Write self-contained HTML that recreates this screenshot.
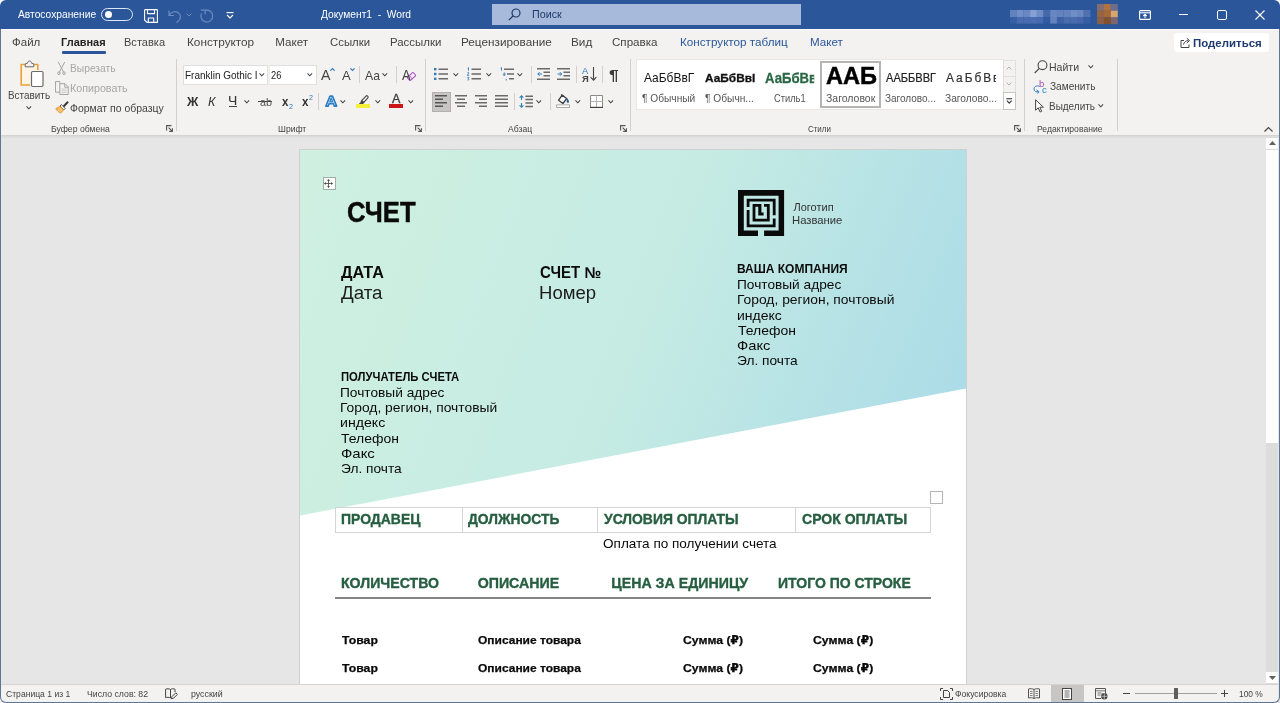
<!DOCTYPE html>
<html lang="ru">
<head>
<meta charset="utf-8">
<title>Документ1 - Word</title>
<style>
html,body{margin:0;padding:0;}
body{width:1280px;height:703px;overflow:hidden;background:#e6e6e6;font-family:"Liberation Sans",sans-serif;}
#app{position:relative;width:1280px;height:703px;overflow:hidden;will-change:transform;}
.abs{position:absolute;}
.t{position:absolute;white-space:pre;line-height:1;transform-origin:0 50%;}
svg{position:absolute;overflow:visible;}
.sep{position:absolute;width:1px;background:#d2d0ce;}
.chev{position:absolute;width:5.6px;height:3.3px;margin-left:0.3px;}
</style>
</head>
<body>
<div id="app">
<!-- title bar -->
<div class="abs" style="left:0;top:0;width:1280px;height:12px;background:#fff;"></div>
<div class="abs" style="left:0;top:0;width:1280px;height:28.500px;background:#2b579a;border-radius:6px 6px 0 0;"></div>
<div class="abs" style="left:492px;top:4px;width:309px;height:21px;background:#a7badb;"></div>
<!-- autosave toggle -->
<div class="abs" style="left:101px;top:8px;width:30px;height:11px;border:1px solid #dde6f4;border-radius:7px;"></div>
<div class="abs" style="left:105px;top:11px;width:7px;height:7px;border-radius:50%;background:#fff;"></div>
<!-- save icon -->
<svg style="left:144px;top:9px;" width="14" height="14" viewBox="0 0 14 14" fill="none" stroke="#fff" stroke-width="1.100" stroke-linejoin="round">
<path d="M1.500.6h11.200c.4 0 .7.300.7.700v12.100H3L.6 11V1.300c0-.400.300-.700.900-.700z"/><path d="M3.500.6v4h7V.6"/><path d="M4.300 13.400V9h5.400v4.400"/></svg>
<!-- undo / redo (disabled) -->
<svg style="left:167px;top:9px;" width="16" height="14" viewBox="0 0 16 14" fill="none" stroke="#6d8cc0" stroke-width="1.2">
<path d="M2 1.5v5h5"/><path d="M2.3 6.3C4 3 8 1.800 11 3.500c3 1.800 3.300 6 .4 8.500L9.500 13.500"/></svg>
<svg style="left:186px;top:13px;" width="6" height="4" viewBox="0 0 6 4" fill="none" stroke="#6d8cc0" stroke-width="1"><path d="M.5.5L3 3 5.500.5"/></svg>
<svg style="left:200px;top:9px;" width="14" height="14" viewBox="0 0 14 14" fill="none" stroke="#6d8cc0" stroke-width="1.200"><path d="M5.200 1.400A5.900 5.900 0 1 1 1.500 4.500"/><path d="M.8 1.100h4.400v4.200"/></svg>
<!-- customize qat -->
<svg style="left:226px;top:12px;" width="8" height="7" viewBox="0 0 8 7" fill="none" stroke="#fff" stroke-width="1.1"><path d="M.5.6h7"/><path d="M1 3l3 3 3-3"/></svg>
<!-- search magnifier -->
<svg style="left:508px;top:8px;" width="13" height="13" viewBox="0 0 13 13" fill="none" stroke="#1e3a68" stroke-width="1.2"><circle cx="8" cy="5" r="4"/><path d="M5 8L.8 12.200"/></svg>
<!-- blurred account name -->
<svg style="left:1009.600px;top:10.400px;" width="80.400" height="13.600" viewBox="0 0 80.400 13.600"><rect x="0.00" y="0" width="6.80" height="7" fill="rgb(98,130,190)"/><rect x="6.70" y="0" width="6.80" height="7" fill="rgb(112,142,200)"/><rect x="13.40" y="0" width="6.80" height="7" fill="rgb(105,135,195)"/><rect x="20.10" y="0" width="6.80" height="7" fill="rgb(135,160,212)"/><rect x="26.80" y="0" width="6.80" height="7" fill="rgb(110,140,200)"/><rect x="33.50" y="0" width="6.80" height="7" fill="rgb(70,105,170)"/><rect x="40.20" y="0" width="6.80" height="7" fill="rgb(105,135,195)"/><rect x="46.90" y="0" width="6.80" height="7" fill="rgb(100,130,190)"/><rect x="53.60" y="0" width="6.80" height="7" fill="rgb(100,130,190)"/><rect x="60.30" y="0" width="6.80" height="7" fill="rgb(112,142,198)"/><rect x="67.00" y="0" width="6.80" height="7" fill="rgb(105,135,192)"/><rect x="73.70" y="0" width="6.80" height="7" fill="rgb(80,112,175)"/><rect x="0.00" y="7" width="6.80" height="6.600" fill="rgb(55,95,165)"/><rect x="6.70" y="7" width="6.80" height="6.600" fill="rgb(72,108,175)"/><rect x="13.40" y="7" width="6.80" height="6.600" fill="rgb(72,108,175)"/><rect x="20.10" y="7" width="6.80" height="6.600" fill="rgb(75,110,178)"/><rect x="26.80" y="7" width="6.80" height="6.600" fill="rgb(70,105,175)"/><rect x="33.50" y="7" width="6.80" height="6.600" fill="rgb(50,90,160)"/><rect x="40.20" y="7" width="6.80" height="6.600" fill="rgb(100,130,190)"/><rect x="46.90" y="7" width="6.80" height="6.600" fill="rgb(62,98,168)"/><rect x="53.60" y="7" width="6.80" height="6.600" fill="rgb(75,108,172)"/><rect x="60.30" y="7" width="6.80" height="6.600" fill="rgb(75,108,172)"/><rect x="67.00" y="7" width="6.80" height="6.600" fill="rgb(70,104,170)"/><rect x="73.70" y="7" width="6.80" height="6.600" fill="rgb(55,94,162)"/></svg>
<svg style="left:1096.800px;top:3.900px;" width="20.700" height="20.100" viewBox="0 0 20.700 20.100"><rect x="0.00" y="0.00" width="7" height="6.800" fill="rgb(130,110,115)"/><rect x="6.90" y="0.00" width="7" height="6.800" fill="rgb(175,115,65)"/><rect x="13.80" y="0.00" width="7" height="6.800" fill="rgb(110,110,140)"/><rect x="0.00" y="6.70" width="7" height="6.800" fill="rgb(150,100,65)"/><rect x="6.90" y="6.70" width="7" height="6.800" fill="rgb(165,105,55)"/><rect x="13.80" y="6.70" width="7" height="6.800" fill="rgb(215,165,110)"/><rect x="0.00" y="13.40" width="7" height="6.800" fill="rgb(140,95,70)"/><rect x="6.90" y="13.40" width="7" height="6.800" fill="rgb(130,80,45)"/><rect x="13.80" y="13.40" width="7" height="6.800" fill="rgb(125,100,110)"/></svg>
<!-- ribbon display options -->
<svg style="left:1139px;top:10px;" width="12" height="10" viewBox="0 0 12 10" fill="none" stroke="#fff" stroke-width="1.1"><rect x=".6" y=".6" width="10.800" height="8.800" rx="1"/><path d="M.6 2.800h10.800"/><path d="M6 8V4.500M4.300 6L6 4.300 7.700 6"/></svg>
<!-- window controls -->
<div class="abs" style="left:1179px;top:14px;width:9px;height:1px;background:#fff;"></div>
<div class="abs" style="left:1217px;top:10px;width:8px;height:8px;border:1px solid #fff;border-radius:2px;"></div>
<svg style="left:1255px;top:10px;" width="10" height="10" viewBox="0 0 10 10" fill="none" stroke="#fff" stroke-width="1.1"><path d="M.5.5l9 9M9.500.5l-9 9"/></svg>

<!-- ribbon background -->
<div class="abs" style="left:0;top:28.500px;width:1280px;height:106.500px;background:#f3f2f1;"></div>
<div class="abs" style="left:0;top:28.500px;width:1280px;height:1.500px;background:#fbfbfb;"></div>
<div class="abs" style="left:0;top:135px;width:1280px;height:4px;background:linear-gradient(#cfcfcf,#dcdcdc 40%,#e6e6e6);"></div>
<!-- active tab underline -->
<div class="abs" style="left:62px;top:51px;width:44px;height:3px;background:#2b579a;border-radius:1px;"></div>
<!-- share button -->
<div class="abs" style="left:1174px;top:33px;width:95px;height:19px;background:#fff;border-radius:3px;"></div>
<svg style="left:1180px;top:37px;" width="11" height="11" viewBox="0 0 11 11" fill="none" stroke="#444" stroke-width="1"><path d="M4 3.500H1v7h8V7.500"/><path d="M3.500 7.500C4 5 6 3.600 8.500 3.600M6.800 1.200L9.500 3.600 6.800 6"/></svg>

<!-- ===== Clipboard group ===== -->
<!-- paste icon -->
<svg style="left:20px;top:60px;" width="24" height="27" viewBox="0 0 24 27" fill="none">
<rect x="1.200" y="4.500" width="16.600" height="20.500" fill="#fdf4e6"/><path d="M5 4.500H1.200v20.500h9" stroke="#e9a23b" stroke-width="1.600"/><path d="M13 4.500h4.800V10" stroke="#e9a23b" stroke-width="1.600"/>
<path d="M5.200 6.800V3.800l2.300-.6C7.700 1.700 8.500 1 9.500 1s1.800.7 2 2.200l2.300.6v3z" stroke="#6a6a6a" stroke-width="1" fill="#f3f2f1"/>
<rect x="11.500" y="11.500" width="11.500" height="15" rx="1.200" stroke="#6a6a6a" stroke-width="1.200" fill="#fff"/></svg>
<svg class="chev" style="left:26px;top:106px;" viewBox="0 0 7 4" fill="none" stroke="#444" stroke-width="1.300"><path d="M.6.5l2.900 2.900L6.400.5"/></svg>
<!-- cut icon (disabled) -->
<svg style="left:57px;top:61.500px;" width="9" height="13" viewBox="0 0 9 13" fill="none" stroke="#a3a3a3" stroke-width="1"><path d="M1.300 0l5.200 10M7.700 0L2.500 10"/><circle cx="2" cy="11.200" r="1.300"/><circle cx="7" cy="11.200" r="1.300"/></svg>
<!-- copy icon (disabled) -->
<svg style="left:54.500px;top:81px;" width="14" height="14" viewBox="0 0 14 14" fill="none" stroke="#a6a6a6" stroke-width="1"><path d="M4.800 2.700V.5H.5v10.700h4.300"/><path d="M4.800 2.700h5.200l3.200 3.200v7.600H4.800z" fill="#f3f2f1"/><path d="M9.700 2.700v3.500h3.500"/><path d="M6.500 8h5M6.500 9.800h5M6.500 11.600h5" stroke="#c4c4c4" stroke-width=".8"/></svg>
<!-- format painter -->
<svg style="left:55px;top:101px;" width="14" height="13" viewBox="0 0 14 13" fill="none"><path d="M12.600 1.200L9 5" stroke="#3b3b3b" stroke-width="2" stroke-linecap="round"/><path d="M6.300 3.600l3.900 3.800-1.300 1.400L5 5z" fill="#fff" stroke="#3b3b3b" stroke-width=".9"/><path d="M5 5.300L.8 7.600c1.300 2.300 2.900 3.800 4.800 4.600L8.700 9z" fill="#f6b55a" stroke="#dd9126" stroke-width=".8"/><path d="M3 8.500l2.500 2.300M4.500 7l2.700 2.700" stroke="#fde6c4" stroke-width=".7"/></svg>
<svg style="left:166px;top:125px;" width="7" height="7" viewBox="0 0 7 7" fill="none" stroke="#555" stroke-width="1.100"><path d="M.6 5.500V.6h4.900"/><path d="M2.600 2.600l3.600 3.600M6.400 3.200v3.200H3.200"/></svg>
<div class="sep" style="left:176px;top:59px;height:72px;"></div>

<!-- ===== Font group ===== -->
<div class="abs" style="left:183px;top:65px;width:83px;height:18px;background:#fff;border:1px solid #e1dfdd;"></div>
<div class="abs" style="left:269px;top:65px;width:46px;height:18px;background:#fff;border:1px solid #e1dfdd;border-left:1px solid #eee;"></div>
<svg class="chev" style="left:259px;top:73px;" viewBox="0 0 7 4" fill="none" stroke="#444" stroke-width="1.300"><path d="M.6.5l2.900 2.900L6.400.5"/></svg>
<svg class="chev" style="left:307px;top:73px;" viewBox="0 0 7 4" fill="none" stroke="#444" stroke-width="1.300"><path d="M.6.5l2.900 2.900L6.400.5"/></svg>
<!-- grow / shrink font carets -->
<svg style="left:330px;top:68px;" width="5" height="3" viewBox="0 0 5 3" fill="none" stroke="#2d7bbf" stroke-width="1.200"><path d="M.4 2.700L2.500.6l2.100 2.100"/></svg>
<svg style="left:350px;top:68px;" width="5" height="3" viewBox="0 0 5 3" fill="none" stroke="#2d7bbf" stroke-width="1.200"><path d="M.4.400L2.500 2.500 4.600.4"/></svg>
<div class="sep" style="left:359px;top:66px;height:17px;"></div>
<svg class="chev" style="left:382px;top:73px;" viewBox="0 0 7 4" fill="none" stroke="#444" stroke-width="1.300"><path d="M.6.5l2.900 2.900L6.400.5"/></svg>
<div class="sep" style="left:396px;top:66px;height:17px;"></div>
<!-- clear formatting eraser -->
<svg style="left:406px;top:72px;" width="11" height="9" viewBox="0 0 11 9"><g transform="rotate(-42 5.500 4.500)"><rect x="1.500" y="2.200" width="8" height="4.600" rx="1" fill="#f6e9fa" stroke="#a64fc0" stroke-width="1"/><path d="M4.500 2.200v4.600" stroke="#a64fc0" stroke-width=".8"/></g></svg>
<div class="sep" style="left:318px;top:93px;height:17px;"></div>
<!-- row 2 -->
<div class="abs" style="left:229px;top:106px;width:8px;height:1px;background:#444;"></div>
<svg class="chev" style="left:244px;top:100px;" viewBox="0 0 7 4" fill="none" stroke="#444" stroke-width="1.300"><path d="M.6.5l2.900 2.900L6.400.5"/></svg>
<div class="abs" style="left:258px;top:101px;width:14px;height:1px;background:#444;"></div>
<!-- text effects A -->
<svg style="left:324.500px;top:95px;" width="12.500" height="12.300" viewBox="0 0 15 14" fill="none" stroke-linejoin="round"><path d="M1 13L6 1h3l5 12h-2.800l-1.100-3H4.900l-1.100 3z" fill="#d6eaf8" stroke="#2a7cc4" stroke-width="1.900"/><path d="M5.800 7.700h3.400L7.500 3.200z" fill="#f3f2f1" stroke="#2a7cc4" stroke-width="1.300"/></svg>
<svg class="chev" style="left:340px;top:100px;" viewBox="0 0 7 4" fill="none" stroke="#444" stroke-width="1.300"><path d="M.6.5l2.900 2.900L6.400.5"/></svg>
<!-- highlighter -->
<svg style="left:358px;top:94.500px;" width="11.500" height="10" viewBox="0 0 13 11" fill="none" stroke="#444" stroke-width="1.300" stroke-linejoin="round"><path d="M4.200 6.200L9.300.8c.8-.6 2.700 1 2 1.900L6.600 8.300z" fill="#fff"/><path d="M4.200 6.200l-.9 2.300-1.700 1.700 3.300-.5 1.700-1.400" fill="#444"/></svg>
<div class="abs" style="left:356px;top:104.200px;width:14px;height:3.800px;background:#f4ef38;"></div>
<svg class="chev" style="left:375px;top:100px;" viewBox="0 0 7 4" fill="none" stroke="#444" stroke-width="1.300"><path d="M.6.5l2.900 2.900L6.400.5"/></svg>
<div class="abs" style="left:389px;top:104.200px;width:14px;height:3.800px;background:#cc1616;"></div>
<svg class="chev" style="left:408px;top:100px;" viewBox="0 0 7 4" fill="none" stroke="#444" stroke-width="1.300"><path d="M.6.5l2.900 2.900L6.400.5"/></svg>
<svg style="left:415px;top:125px;" width="7" height="7" viewBox="0 0 7 7" fill="none" stroke="#555" stroke-width="1.100"><path d="M.6 5.500V.6h4.900"/><path d="M2.600 2.600l3.600 3.600M6.400 3.200v3.200H3.200"/></svg>
<div class="sep" style="left:425px;top:59px;height:72px;"></div>

<!-- ===== Paragraph group ===== -->
<!-- bullets -->
<svg style="left:434px;top:67px;" width="14" height="14" viewBox="0 0 14 14" fill="none"><g fill="#2d7bbf"><rect x="0" y="1" width="2.400" height="2.400"/><rect x="0" y="5.800" width="2.400" height="2.400"/><rect x="0" y="10.600" width="2.400" height="2.400"/></g><g stroke="#6a6a6a" stroke-width="1.400"><path d="M4.500 2.200H14M4.500 7H14M4.500 11.800H14"/></g></svg>
<svg class="chev" style="left:453px;top:73px;" viewBox="0 0 7 4" fill="none" stroke="#444" stroke-width="1.300"><path d="M.6.5l2.900 2.900L6.400.5"/></svg>
<!-- numbering -->
<svg style="left:467px;top:67px;" width="14" height="14" viewBox="0 0 14 14" fill="none"><g stroke="#2d7bbf" stroke-width=".9"><path d="M.6 1.300l.9-.6v3M.4 5.800c.8-.7 1.700-.2 1.300.6L.4 8.300h1.700M.4 10.400h1.500l-.8 1.200c1.200 0 1.100 1.700-.7 1.500"/></g><g stroke="#6a6a6a" stroke-width="1.400"><path d="M4.500 2.200H14M4.500 7H14M4.500 11.800H14"/></g></svg>
<svg class="chev" style="left:486px;top:73px;" viewBox="0 0 7 4" fill="none" stroke="#444" stroke-width="1.300"><path d="M.6.5l2.900 2.900L6.400.5"/></svg>
<!-- multilevel -->
<svg style="left:500px;top:67px;" width="14" height="14" viewBox="0 0 14 14" fill="none"><g stroke="#2d7bbf" stroke-width=".9"><path d="M.6 1.300l.9-.6v3"/><path d="M3.500 6.200c.6-.5 1.500-.4 1.500.4v1.700c-.7.3-1.700.2-1.700-.5 0-.7.9-.8 1.700-.7"/><path d="M6.200 10.500v.2M6.200 12v1.500"/></g><g stroke="#6a6a6a" stroke-width="1.400"><path d="M4 2.200H14M7 7H14M9 11.800H14"/></g></svg>
<svg class="chev" style="left:517px;top:73px;" viewBox="0 0 7 4" fill="none" stroke="#444" stroke-width="1.300"><path d="M.6.5l2.900 2.900L6.400.5"/></svg>
<div class="sep" style="left:531px;top:66px;height:17px;"></div>
<!-- decrease / increase indent -->
<svg style="left:537px;top:68px;" width="13" height="12" viewBox="0 0 13 12" fill="none"><g stroke="#6a6a6a" stroke-width="1.400"><path d="M0 .7h13M6.500 4.200H13M6.500 7.800H13M0 11.300h13"/></g><path d="M5 6H.8M2.600 4.200L.8 6l1.800 1.800" stroke="#2d7bbf" stroke-width="1"/></svg>
<svg style="left:557px;top:68px;" width="13" height="12" viewBox="0 0 13 12" fill="none"><g stroke="#6a6a6a" stroke-width="1.400"><path d="M0 .7h13M6.500 4.200H13M6.500 7.800H13M0 11.300h13"/></g><path d="M.5 6h4.200M2.900 4.200L4.700 6 2.900 7.800" stroke="#2d7bbf" stroke-width="1"/></svg>
<div class="sep" style="left:576px;top:66px;height:17px;"></div>
<!-- sort arrow -->
<svg style="left:590px;top:67px;" width="7" height="14" viewBox="0 0 7 14" fill="none" stroke="#444" stroke-width="1.100"><path d="M3.500 0v13M.6 10.200l2.900 2.900 2.900-2.900"/></svg>
<div class="sep" style="left:602px;top:66px;height:17px;"></div>
<!-- row 2: alignment -->
<div class="abs" style="left:432px;top:92px;width:17px;height:18px;background:#c8c6c4;border:1px solid #b3b0ad;"></div>
<svg style="left:435px;top:95px;" width="12" height="13" viewBox="0 0 12 13" fill="none" stroke="#555" stroke-width="1.500"><path d="M0 .75h12M0 4.250h8M0 7.750h12M0 11.250h8"/></svg>
<svg style="left:455px;top:95px;" width="12" height="13" viewBox="0 0 12 13" fill="none" stroke="#6a6a6a" stroke-width="1.500"><path d="M0 .75h12M2 4.250h8M0 7.750h12M2 11.250h8"/></svg>
<svg style="left:475px;top:95px;" width="12" height="13" viewBox="0 0 12 13" fill="none" stroke="#6a6a6a" stroke-width="1.500"><path d="M0 .75h12M4 4.250h8M0 7.750h12M4 11.250h8"/></svg>
<svg style="left:495px;top:95px;" width="13" height="13" viewBox="0 0 13 13" fill="none" stroke="#6a6a6a" stroke-width="1.500"><path d="M0 .75h13M0 4.250h13M0 7.750h13M0 11.250h13"/></svg>
<div class="sep" style="left:514px;top:93px;height:17px;"></div>
<!-- line spacing -->
<svg style="left:519.300px;top:94.500px;" width="14.200" height="13" viewBox="0 0 14.200 13" fill="none"><path d="M2.500.8v4.200M.6 2.700L2.500.8l1.900 1.900M2.500 12.200V8M.6 10.300l1.900 1.900 1.900-1.900" stroke="#2e86b8" stroke-width="1.100"/><path d="M6.400 1.200h7.600M6.400 4.600h7.600M6.400 8h7.600M6.400 11.400h7.600" stroke="#6a6a6a" stroke-width="1.500"/></svg>
<svg class="chev" style="left:536px;top:100px;" viewBox="0 0 7 4" fill="none" stroke="#444" stroke-width="1.300"><path d="M.6.5l2.900 2.900L6.400.5"/></svg>
<div class="sep" style="left:550px;top:93px;height:17px;"></div>
<!-- shading bucket -->
<svg style="left:556px;top:94px;" width="14" height="14" viewBox="0 0 14 14" fill="none"><path d="M6.200 1.200L2.600 6.200l4.300 3.300 3.700-4.900z" stroke="#3b3b3b" stroke-width="1.300" fill="#fff" stroke-linejoin="round"/><path d="M5.200.6l2.600 2" stroke="#3b3b3b" stroke-width="1.200"/><path d="M10.700 3.800c1.200 1.500 2.300 2.700 2.300 3.900 0 1.500-2.300 1.500-2.300 0z" fill="#225f92"/><rect x=".6" y="10.900" width="12.800" height="2.600" fill="#fff" stroke="#9a9896" stroke-width=".8"/></svg>
<svg class="chev" style="left:575px;top:100px;" viewBox="0 0 7 4" fill="none" stroke="#444" stroke-width="1.300"><path d="M.6.5l2.900 2.900L6.400.5"/></svg>
<!-- borders -->
<svg style="left:589.500px;top:94.500px;" width="13" height="13" viewBox="0 0 13 13" fill="none" stroke="#8a8886" stroke-width="1"><path d="M.5 12.500V.5h12v12" fill="#fff"/><path d="M6.500 .5v12M.5 6.500h12" stroke="#b5b3b1"/><path d="M0 12.400h13" stroke="#444" stroke-width="1.200"/></svg>
<svg class="chev" style="left:608px;top:100px;" viewBox="0 0 7 4" fill="none" stroke="#444" stroke-width="1.300"><path d="M.6.5l2.900 2.900L6.400.5"/></svg>
<svg style="left:620px;top:125px;" width="7" height="7" viewBox="0 0 7 7" fill="none" stroke="#555" stroke-width="1.100"><path d="M.6 5.500V.6h4.900"/><path d="M2.600 2.600l3.600 3.600M6.400 3.200v3.200H3.200"/></svg>
<div class="sep" style="left:630px;top:59px;height:72px;"></div>

<!-- ===== Styles group ===== -->
<div class="abs" style="left:637px;top:60px;width:366px;height:49px;background:#fff;box-shadow:0 0 0 1px #e9e7e5;"></div>
<div class="abs" style="left:820px;top:61px;width:57px;height:43px;border:2px solid #b7b5b3;background:#fff;"></div>
<!-- gallery scroll buttons -->
<div class="abs" style="left:1003px;top:60px;width:11px;height:15px;border:1px solid #e1dfdd;background:#f3f2f1;"></div>
<div class="abs" style="left:1003px;top:76px;width:11px;height:15px;border:1px solid #e1dfdd;background:#f3f2f1;"></div>
<div class="abs" style="left:1003px;top:92px;width:11px;height:16px;border:1px solid #c8c6c4;background:#fff;"></div>
<svg style="left:1006px;top:66px;" width="6" height="4" viewBox="0 0 6 4" fill="none" stroke="#b5b3b1" stroke-width="1"><path d="M.5 3.500L3 1l2.500 2.500"/></svg>
<svg style="left:1006px;top:82px;" width="6" height="4" viewBox="0 0 6 4" fill="none" stroke="#b5b3b1" stroke-width="1"><path d="M.5.5L3 3 5.500.5"/></svg>
<svg style="left:1005.500px;top:97.500px;" width="6.500" height="6" viewBox="0 0 8 7" fill="none" stroke="#444" stroke-width="1.500"><path d="M.5.7h7"/><path d="M1 3l3 3 3-3"/></svg>
<svg style="left:1014px;top:125px;" width="7" height="7" viewBox="0 0 7 7" fill="none" stroke="#555" stroke-width="1.100"><path d="M.6 5.500V.6h4.900"/><path d="M2.600 2.600l3.600 3.600M6.400 3.200v3.200H3.200"/></svg>
<div class="sep" style="left:1024px;top:59px;height:72px;"></div>

<!-- ===== Editing group ===== -->
<svg style="left:1034px;top:60px;" width="14" height="14" viewBox="0 0 14 14" fill="none" stroke="#444" stroke-width="1.100"><circle cx="8.500" cy="5.200" r="4.400"/><path d="M5.300 8.400L.7 13"/></svg>
<svg class="chev" style="left:1088px;top:65px;" viewBox="0 0 7 4" fill="none" stroke="#444" stroke-width="1.300"><path d="M.6.5l2.900 2.900L6.400.5"/></svg>
<svg style="left:1033px;top:85px;" width="8" height="9" viewBox="0 0 8 9" fill="none" stroke="#2d7bbf" stroke-width="1"><path d="M6.500 1.500C4 0 1 1.500 1 4s2.500 3.500 4.500 2.500"/><path d="M3.500 5l2.300 1.600-1.200 2"/></svg>
<svg class="chev" style="left:1098px;top:104px;" viewBox="0 0 7 4" fill="none" stroke="#444" stroke-width="1.300"><path d="M.6.5l2.900 2.900L6.400.5"/></svg>
<svg style="left:1035px;top:99px;" width="10" height="14" viewBox="0 0 10 14" fill="#fff" stroke="#444" stroke-width="1" stroke-linejoin="round"><path d="M.6.8v10.400l2.600-2.400 1.900 4.200 1.600-.7-1.900-4.100h3.600z"/></svg>
<div class="sep" style="left:1117px;top:59px;height:72px;"></div>
<!-- collapse ribbon -->
<svg style="left:1264px;top:127px;" width="9" height="5" viewBox="0 0 9 5" fill="none" stroke="#444" stroke-width="1.200"><path d="M.5 4.500l4-4 4 4"/></svg>

<!-- ===== Document area ===== -->
<div class="abs" style="left:299px;top:149px;width:667.500px;height:536px;background:#cdd2d0;"></div>
<div class="abs" style="left:300px;top:150px;width:665.500px;height:535px;background:#fff;"></div>
<svg style="left:300px;top:150px;" width="666" height="370" viewBox="0 0 666 370">
<defs><linearGradient id="pg" gradientUnits="userSpaceOnUse" x1="0" y1="60" x2="666" y2="330"><stop offset="0" stop-color="#cff0e1"/><stop offset="0.5" stop-color="#c5ebe3"/><stop offset="1" stop-color="#a9dae8"/></linearGradient></defs>
<polygon points="0,0 666,0 666,238.400 0,365.500" fill="url(#pg)"/>
</svg>
<div class="abs" style="left:965.500px;top:149px;width:1px;height:536px;background:#cdd2d0;"></div>
<div class="abs" style="left:966.500px;top:149px;width:1px;height:536px;background:#e6e6e6;"></div>
<!-- table move handle -->
<div class="abs" style="left:323px;top:177px;width:11px;height:11px;background:#fff;border:1px solid #9fb0a8;"></div>
<svg style="left:324.400px;top:179px;" width="9" height="9" viewBox="0 0 9 9"><path d="M4.500 1v7M1 4.500h7" stroke="#555" stroke-width=".9" fill="none"/><path d="M4.500 0L6 1.800H3zM4.500 9L6 7.200H3zM0 4.500L1.800 3v3zM9 4.500L7.200 3v3z" fill="#444"/></svg>
<!-- logo (maze) -->
<svg style="left:738.2px;top:190.2px;" width="46.100" height="46" viewBox="0 0 46.100 46"><path fill="#0a0a0a" d="M0 0h46.1v5.7h-46.1zM0 0h5.8v46h-5.8zM40.6 0h5.5v46h-5.5zM0 40.4h20v5.6h-20zM26.1 40.4h20v5.6h-20zM8.7 8.8h28.9v2.8h-28.9zM8.7 34.5h28.9v2.8h-28.9zM8.7 8.8h2.8v8.1h-2.8zM8.7 20h2.8v17.3h-2.8zM34.8 8.8h2.8v16.5h-2.8zM34.8 28.6h2.8v8.7h-2.8zM14.6 14h8.8v2.8h-8.8zM26 14h5.7v2.8h-5.7zM14.6 14h2.8v17.5h-2.8zM28.9 14h2.8v17.5h-2.8zM14.6 28.7h17.1v2.8h-17.1zM20.25 14h3.15v11.6h-3.15zM20.25 22.6h5.35v3h-5.35z"/></svg>
<!-- table 1 -->
<div class="abs" style="left:335px;top:507px;width:594px;height:24px;border:1px solid #d4d4d4;background:#fff;"></div>
<div class="abs" style="left:462px;top:508px;width:1px;height:24px;background:#d4d4d4;"></div>
<div class="abs" style="left:597px;top:508px;width:1px;height:24px;background:#d4d4d4;"></div>
<div class="abs" style="left:795px;top:508px;width:1px;height:24px;background:#d4d4d4;"></div>
<!-- table resize handle -->
<div class="abs" style="left:930px;top:491px;width:11px;height:11px;background:#fff;border:1px solid #b4b4b4;"></div>
<!-- table 2 header rule -->
<div class="abs" style="left:335px;top:597.400px;width:596px;height:1.600px;background:#858585;"></div>

<!-- vertical scrollbar -->
<div class="abs" style="left:1266px;top:137px;width:12px;height:547px;background:#dcdcdc;"></div>
<div class="abs" style="left:1266px;top:138px;width:12px;height:11px;background:#fff;"></div>
<div class="abs" style="left:1266px;top:150px;width:12px;height:293px;background:#fff;"></div>
<div class="abs" style="left:1266px;top:672px;width:12px;height:11px;background:#fff;"></div>
<svg style="left:1269px;top:141px;" width="7" height="4" viewBox="0 0 7 4"><path d="M0 4L3.500 0 7 4z" fill="#606060"/></svg>
<svg style="left:1269px;top:676px;" width="7" height="4" viewBox="0 0 7 4"><path d="M0 0L3.500 4 7 0z" fill="#606060"/></svg>


<!-- ===== Status bar ===== -->
<div class="abs" style="left:0;top:685px;width:1278px;height:18px;background:#f3f2f1;"></div>
<div class="abs" style="left:0;top:684px;width:1278px;height:1px;background:#d6d4d2;"></div>
<div class="abs" style="left:0;top:680px;width:1280px;height:23px;background:transparent;box-sizing:border-box;border:1.500px solid #5d7696;border-top:none;border-radius:0 0 6px 6px;"></div>
<div class="abs" style="left:0;top:29px;width:1.300px;height:655px;background:#5d7696;"></div>
<div class="abs" style="left:1278.500px;top:29px;width:1.500px;height:655px;background:#5d7696;"></div>
<svg style="left:165px;top:688px;" width="12" height="12" viewBox="0 0 12 12" fill="none" stroke="#444" stroke-width="1"><path d="M5.500 1.500C4 .6 2 .6.6 1.200v8.500c1.400-.6 3.400-.6 4.900.3M5.500 1.500c1.400-.9 3-.9 4.500-.3v3"/><path d="M5.500 1.500V10"/><path d="M10.800 4.800L7 8.600l-.6 2.200 2.200-.6 3.800-3.800z" fill="#f3f2f1"/></svg>
<!-- focus icon -->
<svg style="left:940px;top:688px;" width="13" height="12" viewBox="0 0 13 12" fill="none" stroke="#444" stroke-width="1"><path d="M.5 3V.5H3M10 .5h2.500V3M12.500 9v2.500H10M3 11.500H.5V9"/><path d="M3.500 2.500h4l2 2v5h-6z"/></svg>
<!-- read mode -->
<svg style="left:1028px;top:688px;" width="12" height="11" viewBox="0 0 12 11" fill="none" stroke="#555" stroke-width="1"><path d="M6 1.500C4.500.6 2.500.5.500 1v9c2-.5 4-.4 5.500.5 1.500-.9 3.500-1 5.500-.5V1C9.500.5 7.500.6 6 1.500zM6 1.500v9"/><path d="M2 3.500h2.500M2 5.500h2.500M2 7.500h2.500M7.500 3.500H10M7.500 5.500H10M7.500 7.500H10" stroke-width=".7"/></svg>
<!-- print layout (selected) -->
<div class="abs" style="left:1051px;top:685px;width:33px;height:17px;background:#c8c6c4;"></div>
<svg style="left:1062px;top:688px;" width="10" height="12" viewBox="0 0 10 12" fill="#fff" stroke="#444" stroke-width="1"><rect x=".5" y=".5" width="9" height="11"/><path d="M2.500 3h5M2.500 5h5M2.500 7h5M2.500 9h5" stroke-width=".8"/></svg>
<!-- web layout -->
<svg style="left:1095px;top:688px;" width="13" height="12" viewBox="0 0 13 12" fill="none" stroke="#555" stroke-width="1"><path d="M6 10.500H.5V.5h10V5"/><path d="M.5 2.800h10M2.500 5h4M2.500 7h3" stroke-width=".8"/><circle cx="9.300" cy="8.300" r="3.200" fill="#444" stroke="none"/><path d="M6.300 8.300h6M9.300 5.300v6" stroke="#f3f2f1" stroke-width=".6"/></svg>
<!-- zoom slider -->
<div class="abs" style="left:1123px;top:693px;width:7px;height:1px;background:#444;"></div>
<div class="abs" style="left:1135px;top:693px;width:82px;height:1px;background:#a19f9d;"></div>
<div class="abs" style="left:1174px;top:688px;width:4px;height:11px;background:#605e5c;"></div>
<div class="abs" style="left:1221px;top:693px;width:7px;height:1px;background:#444;"></div>
<div class="abs" style="left:1224px;top:690px;width:1px;height:7px;background:#444;"></div>

<!-- text labels -->
<span class="t" style="left:18.00px;top:8px;line-height:12px;color:#ffffff;font-size:11.3px;transform:scaleX(0.9073);">Автосохранение</span>
<span class="t" style="left:321.30px;top:8px;line-height:12px;color:#ffffff;font-size:11.3px;transform:scaleX(0.9043);">Документ1  -  Word</span>
<span class="t" style="left:532.35px;top:8px;line-height:12px;color:#1e3a68;font-size:11.3px;transform:scaleX(0.9488);">Поиск</span>
<span class="t" style="left:11.76px;top:36px;line-height:12px;color:#444444;font-size:11.6px;transform:scaleX(0.9926);">Файл</span>
<span class="t" style="left:61.09px;top:36px;line-height:12px;color:#252423;font-size:11.6px;font-weight:700;transform:scaleX(0.9464);">Главная</span>
<span class="t" style="left:124.05px;top:36px;line-height:12px;color:#444444;font-size:11.6px;transform:scaleX(0.9524);">Вставка</span>
<span class="t" style="left:186.98px;top:36px;line-height:12px;color:#444444;font-size:11.6px;transform:scaleX(1.0162);">Конструктор</span>
<span class="t" style="left:275.30px;top:36px;line-height:12px;color:#444444;font-size:11.6px;">Макет</span>
<span class="t" style="left:329.51px;top:36px;line-height:12px;color:#444444;font-size:11.6px;transform:scaleX(0.9823);">Ссылки</span>
<span class="t" style="left:390.31px;top:36px;line-height:12px;color:#444444;font-size:11.6px;transform:scaleX(0.9851);">Рассылки</span>
<span class="t" style="left:461.49px;top:36px;line-height:12px;color:#444444;font-size:11.6px;transform:scaleX(1.0148);">Рецензирование</span>
<span class="t" style="left:571.49px;top:36px;line-height:12px;color:#444444;font-size:11.6px;transform:scaleX(1.0127);">Вид</span>
<span class="t" style="left:612.00px;top:36px;line-height:12px;color:#444444;font-size:11.6px;">Справка</span>
<span class="t" style="left:679.99px;top:36px;line-height:12px;color:#2b579a;font-size:11.6px;transform:scaleX(1.0071);">Конструктор таблиц</span>
<span class="t" style="left:810.00px;top:36px;line-height:12px;color:#2b579a;font-size:11.6px;">Макет</span>
<span class="t" style="left:1193.46px;top:37px;line-height:12px;color:#1f3b6f;font-size:11.6px;font-weight:700;transform:scaleX(0.9882);">Поделиться</span>
<span class="t" style="left:7.94px;top:89px;line-height:12px;color:#444444;font-size:11.5px;transform:scaleX(0.8635);">Вставить</span>
<span class="t" style="left:69.91px;top:62px;line-height:12px;color:#a6a6a6;font-size:11.5px;transform:scaleX(0.8905);">Вырезать</span>
<span class="t" style="left:69.87px;top:82px;line-height:12px;color:#a6a6a6;font-size:11.5px;transform:scaleX(0.9306);">Копировать</span>
<span class="t" style="left:70.12px;top:102px;line-height:12px;color:#444444;font-size:11.5px;transform:scaleX(0.9095);">Формат по образцу</span>
<span class="t" style="left:51.10px;top:124px;line-height:10px;color:#444444;font-size:9.3px;transform:scaleX(0.9328);">Буфер обмена</span>
<span class="t" style="left:184.63px;top:69px;line-height:12px;color:#222;font-size:11.5px;transform:scaleX(0.8661);">Franklin Gothic I</span>
<span class="t" style="left:271.40px;top:69px;line-height:12px;color:#222;font-size:11.5px;transform:scaleX(0.8085);">26</span>
<span class="t" style="left:321.00px;top:66px;line-height:17px;color:#444444;font-size:15px;transform:scaleX(0.9500);">A</span>
<span class="t" style="left:342.00px;top:68px;line-height:15px;color:#444444;font-size:13px;">A</span>
<span class="t" style="left:365.00px;top:68px;line-height:15px;color:#444444;font-size:13px;transform:scaleX(0.9375);">Aa</span>
<span class="t" style="left:402.20px;top:67px;line-height:16px;color:#444444;font-size:14px;transform:scaleX(0.9189);">A</span>
<span class="t" style="left:186.80px;top:94px;line-height:15px;color:#333;font-size:13px;font-weight:700;transform:scaleX(0.9617);">Ж</span>
<span class="t" style="left:208.32px;top:94px;line-height:15px;color:#333;font-size:13px;font-style:italic;transform:scaleX(0.9677);">К</span>
<span class="t" style="left:228.18px;top:94px;line-height:14px;color:#333;font-size:12.5px;transform:scaleX(1.1200);">Ч</span>
<span class="t" style="left:259.53px;top:96px;line-height:12px;color:#555;font-size:11.5px;transform:scaleX(0.9362);">ab</span>
<span class="t" style="left:282.27px;top:95px;line-height:14px;color:#333;font-size:12.5px;font-weight:700;transform:scaleX(0.9231);">x</span>
<span class="t" style="left:288.75px;top:103px;line-height:7px;color:#2d7bbf;font-size:7px;transform:scaleX(1.0154);">2</span>
<span class="t" style="left:302.27px;top:95px;line-height:14px;color:#333;font-size:12.5px;font-weight:700;transform:scaleX(0.9231);">x</span>
<span class="t" style="left:309.05px;top:94px;line-height:7px;color:#2d7bbf;font-size:7px;transform:scaleX(1.0154);">2</span>
<span class="t" style="left:391.60px;top:92px;line-height:14px;color:#3a3a3a;font-size:12px;transform:scaleX(1.0424);-webkit-text-stroke:0.3px #3a3a3a;">A</span>
<span class="t" style="left:278.31px;top:124px;line-height:10px;color:#444444;font-size:9.3px;transform:scaleX(0.9244);">Шрифт</span>
<span class="t" style="left:581.80px;top:66px;line-height:10px;color:#2d7bbf;font-size:9px;transform:scaleX(1.0333);">A</span>
<span class="t" style="left:581.72px;top:74px;line-height:10px;color:#444;font-size:8.5px;font-weight:700;transform:scaleX(1.1048);">Я</span>
<span class="t" style="left:608.68px;top:67px;line-height:16px;color:#3b3b3b;font-size:14px;font-weight:700;transform:scaleX(1.2444);">¶</span>
<span class="t" style="left:508.00px;top:124px;line-height:10px;color:#444444;font-size:9.3px;transform:scaleX(0.9231);">Абзац</span>
<span class="t" style="left:644.30px;top:70px;line-height:15px;color:#111;font-size:13.5px;transform:scaleX(0.8850);">АаБбВвГ</span>
<span class="t" style="left:642.04px;top:92px;line-height:12px;color:#555;font-size:11px;transform:scaleX(0.9244);">¶ Обычный</span>
<span class="t" style="left:704.75px;top:71px;line-height:14px;color:#111;font-size:11.8px;font-weight:700;transform:scaleX(1.0051);-webkit-text-stroke:0.3px #111;">АаБбВвI</span>
<span class="t" style="left:705.34px;top:92px;line-height:12px;color:#555;font-size:11px;transform:scaleX(0.9268);">¶ Обычн...</span>
<span class="t" style="left:764.79px;top:69px;line-height:17px;color:#2a6846;font-size:15.5px;font-weight:700;transform:scaleX(0.8477);clip-path:inset(0 5.5% 0 0);-webkit-text-stroke:0.3px #2a6846;">АаБбВв</span>
<span class="t" style="left:773.88px;top:92px;line-height:12px;color:#555;font-size:11px;transform:scaleX(0.8438);">Стиль1</span>
<span class="t" style="left:826.06px;top:62px;line-height:27px;color:#000;font-size:24.5px;font-weight:700;transform:scaleX(0.9615);-webkit-text-stroke:0.5px #000;">ААБ</span>
<span class="t" style="left:825.82px;top:92px;line-height:12px;color:#555;font-size:11px;transform:scaleX(0.9522);">Заголовок</span>
<span class="t" style="left:885.50px;top:71px;line-height:14px;color:#222;font-size:12px;transform:scaleX(0.9217);-webkit-text-stroke:0.2px #222;">ААББВВГ</span>
<span class="t" style="left:885.05px;top:92px;line-height:12px;color:#555;font-size:11px;transform:scaleX(0.9083);">Заголово...</span>
<span class="t" style="left:945.80px;top:71px;line-height:14px;color:#333;font-size:12px;letter-spacing:2px;transform:scaleX(0.9907);-webkit-text-stroke:0.2px #333;clip-path:inset(0 10% 0 0);">АаБбВв</span>
<span class="t" style="left:945.34px;top:92px;line-height:12px;color:#555;font-size:11px;transform:scaleX(0.9266);">Заголово...</span>
<span class="t" style="left:808.37px;top:124px;line-height:10px;color:#444444;font-size:9.3px;transform:scaleX(0.8544);">Стили</span>
<span class="t" style="left:1049.28px;top:61px;line-height:12px;color:#444444;font-size:11.5px;transform:scaleX(0.9161);">Найти</span>
<span class="t" style="left:1049.76px;top:80px;line-height:12px;color:#444444;font-size:11.5px;transform:scaleX(0.8788);">Заменить</span>
<span class="t" style="left:1049.33px;top:100px;line-height:12px;color:#444444;font-size:11.5px;transform:scaleX(0.8660);">Выделить</span>
<span class="t" style="left:1039.04px;top:79px;line-height:10px;color:#a349b8;font-size:8.5px;transform:scaleX(1.1250);">b</span>
<span class="t" style="left:1041.51px;top:85px;line-height:10px;color:#2b8cc8;font-size:8.5px;transform:scaleX(1.1467);">c</span>
<span class="t" style="left:1036.81px;top:124px;line-height:10px;color:#444444;font-size:9.3px;transform:scaleX(0.9247);">Редактирование</span>
<span class="t" style="left:346.50px;top:196px;line-height:32px;color:#0a0a0a;font-size:28.6px;font-weight:700;transform:scaleX(0.8954);-webkit-text-stroke:0.5px #0a0a0a;">СЧЕТ</span>
<span class="t" style="left:341.40px;top:264px;line-height:17px;color:#0a0a0a;font-size:16px;font-weight:700;transform:scaleX(1.0095);">ДАТА</span>
<span class="t" style="left:341.40px;top:283px;line-height:20px;color:#1c1c1c;font-size:17.6px;transform:scaleX(1.0667);">Дата</span>
<span class="t" style="left:539.50px;top:264px;line-height:17px;color:#0a0a0a;font-size:16px;font-weight:700;transform:scaleX(0.9386);">СЧЕТ №</span>
<span class="t" style="left:538.62px;top:283px;line-height:20px;color:#1c1c1c;font-size:17.6px;transform:scaleX(1.0538);">Номер</span>
<span class="t" style="left:793.50px;top:201px;line-height:12px;color:#333;font-size:11px;">Логотип</span>
<span class="t" style="left:792.48px;top:214px;line-height:12px;color:#333;font-size:11px;transform:scaleX(1.0241);">Название</span>
<span class="t" style="left:737.28px;top:262px;line-height:14px;color:#0a0a0a;font-size:12.5px;font-weight:700;transform:scaleX(0.9600);">ВАША КОМПАНИЯ</span>
<span class="t" style="left:736.99px;top:277px;line-height:15px;color:#0a0a0a;font-size:13.5px;transform:scaleX(1.0138);">Почтовый адрес</span>
<span class="t" style="left:736.97px;top:292px;line-height:15px;color:#0a0a0a;font-size:13.5px;transform:scaleX(1.0257);">Город, регион, почтовый</span>
<span class="t" style="left:736.96px;top:308px;line-height:15px;color:#0a0a0a;font-size:13.5px;transform:scaleX(1.0371);">индекс</span>
<span class="t" style="left:737.74px;top:323px;line-height:15px;color:#0a0a0a;font-size:13.5px;transform:scaleX(1.0338);">Телефон</span>
<span class="t" style="left:737.18px;top:338px;line-height:15px;color:#0a0a0a;font-size:13.5px;transform:scaleX(1.0915);">Факс</span>
<span class="t" style="left:737.24px;top:353px;line-height:15px;color:#0a0a0a;font-size:13.5px;transform:scaleX(1.0169);">Эл. почта</span>
<span class="t" style="left:340.72px;top:370px;line-height:14px;color:#0a0a0a;font-size:12.5px;font-weight:700;transform:scaleX(0.9023);">ПОЛУЧАТЕЛЬ СЧЕТА</span>
<span class="t" style="left:340.38px;top:385px;line-height:15px;color:#0a0a0a;font-size:13.5px;transform:scaleX(1.0158);">Почтовый адрес</span>
<span class="t" style="left:340.38px;top:400px;line-height:15px;color:#0a0a0a;font-size:13.5px;transform:scaleX(1.0238);">Город, регион, почтовый</span>
<span class="t" style="left:340.35px;top:415px;line-height:15px;color:#0a0a0a;font-size:13.5px;transform:scaleX(1.0491);">индекс</span>
<span class="t" style="left:341.14px;top:431px;line-height:15px;color:#0a0a0a;font-size:13.5px;transform:scaleX(1.0338);">Телефон</span>
<span class="t" style="left:340.57px;top:446px;line-height:15px;color:#0a0a0a;font-size:13.5px;transform:scaleX(1.1051);">Факс</span>
<span class="t" style="left:340.64px;top:461px;line-height:15px;color:#0a0a0a;font-size:13.5px;transform:scaleX(1.0153);">Эл. почта</span>
<span class="t" style="left:341.26px;top:511px;line-height:16px;color:#265e40;font-size:14.2px;font-weight:700;transform:scaleX(0.9838);-webkit-text-stroke:0.35px #265e40;">ПРОДАВЕЦ</span>
<span class="t" style="left:468.30px;top:511px;line-height:16px;color:#265e40;font-size:14.2px;font-weight:700;transform:scaleX(0.9759);-webkit-text-stroke:0.35px #265e40;">ДОЛЖНОСТЬ</span>
<span class="t" style="left:603.84px;top:511px;line-height:16px;color:#265e40;font-size:14.2px;font-weight:700;transform:scaleX(0.9788);-webkit-text-stroke:0.35px #265e40;">УСЛОВИЯ ОПЛАТЫ</span>
<span class="t" style="left:802.01px;top:511px;line-height:16px;color:#265e40;font-size:14.2px;font-weight:700;transform:scaleX(0.9891);-webkit-text-stroke:0.35px #265e40;">СРОК ОПЛАТЫ</span>
<span class="t" style="left:603.49px;top:536px;line-height:15px;color:#0a0a0a;font-size:13.33px;transform:scaleX(1.0167);">Оплата по получении счета</span>
<span class="t" style="left:340.95px;top:575px;line-height:16px;color:#265e40;font-size:14.2px;font-weight:700;transform:scaleX(0.9954);-webkit-text-stroke:0.35px #265e40;">КОЛИЧЕСТВО</span>
<span class="t" style="left:477.70px;top:575px;line-height:16px;color:#265e40;font-size:14.2px;font-weight:700;-webkit-text-stroke:0.35px #265e40;">ОПИСАНИЕ</span>
<span class="t" style="left:611.35px;top:575px;line-height:16px;color:#265e40;font-size:14.2px;font-weight:700;-webkit-text-stroke:0.35px #265e40;">ЦЕНА ЗА ЕДИНИЦУ</span>
<span class="t" style="left:777.96px;top:575px;line-height:16px;color:#265e40;font-size:14.2px;font-weight:700;transform:scaleX(0.9865);-webkit-text-stroke:0.35px #265e40;">ИТОГО ПО СТРОКЕ</span>
<span class="t" style="left:341.70px;top:633px;line-height:14px;color:#0a0a0a;font-size:11.8px;font-weight:700;transform:scaleX(1.0394);-webkit-text-stroke:0.25px #0a0a0a;">Товар</span>
<span class="t" style="left:477.95px;top:633px;line-height:14px;color:#0a0a0a;font-size:11.8px;font-weight:700;transform:scaleX(1.0153);-webkit-text-stroke:0.25px #0a0a0a;">Описание товара</span>
<span class="t" style="left:682.54px;top:633px;line-height:14px;color:#0a0a0a;font-size:11.8px;font-weight:700;font-family:'Liberation Sans','DejaVu Sans',sans-serif;transform:scaleX(1.0330);-webkit-text-stroke:0.25px #0a0a0a;">Сумма (₽)</span>
<span class="t" style="left:812.74px;top:633px;line-height:14px;color:#0a0a0a;font-size:11.8px;font-weight:700;font-family:'Liberation Sans','DejaVu Sans',sans-serif;transform:scaleX(1.0365);-webkit-text-stroke:0.25px #0a0a0a;">Сумма (₽)</span>
<span class="t" style="left:341.70px;top:661px;line-height:14px;color:#0a0a0a;font-size:11.8px;font-weight:700;transform:scaleX(1.0394);-webkit-text-stroke:0.25px #0a0a0a;">Товар</span>
<span class="t" style="left:477.95px;top:661px;line-height:14px;color:#0a0a0a;font-size:11.8px;font-weight:700;transform:scaleX(1.0153);-webkit-text-stroke:0.25px #0a0a0a;">Описание товара</span>
<span class="t" style="left:682.54px;top:661px;line-height:14px;color:#0a0a0a;font-size:11.8px;font-weight:700;font-family:'Liberation Sans','DejaVu Sans',sans-serif;transform:scaleX(1.0330);-webkit-text-stroke:0.25px #0a0a0a;">Сумма (₽)</span>
<span class="t" style="left:812.74px;top:661px;line-height:14px;color:#0a0a0a;font-size:11.8px;font-weight:700;font-family:'Liberation Sans','DejaVu Sans',sans-serif;transform:scaleX(1.0365);-webkit-text-stroke:0.25px #0a0a0a;">Сумма (₽)</span>
<span class="t" style="left:6.44px;top:689px;line-height:10px;color:#444;font-size:9.3px;transform:scaleX(0.9222);">Страница 1 из 1</span>
<span class="t" style="left:86.80px;top:689px;line-height:10px;color:#444;font-size:9.3px;transform:scaleX(0.9375);">Число слов: 82</span>
<span class="t" style="left:190.83px;top:689px;line-height:10px;color:#444;font-size:9.3px;transform:scaleX(0.9488);">русский</span>
<span class="t" style="left:955.04px;top:689px;line-height:10px;color:#444;font-size:9.3px;transform:scaleX(0.9236);">Фокусировка</span>
<span class="t" style="left:1239.32px;top:689px;line-height:10px;color:#444;font-size:9.3px;transform:scaleX(0.9030);">100 %</span>
</div>
</body>
</html>
